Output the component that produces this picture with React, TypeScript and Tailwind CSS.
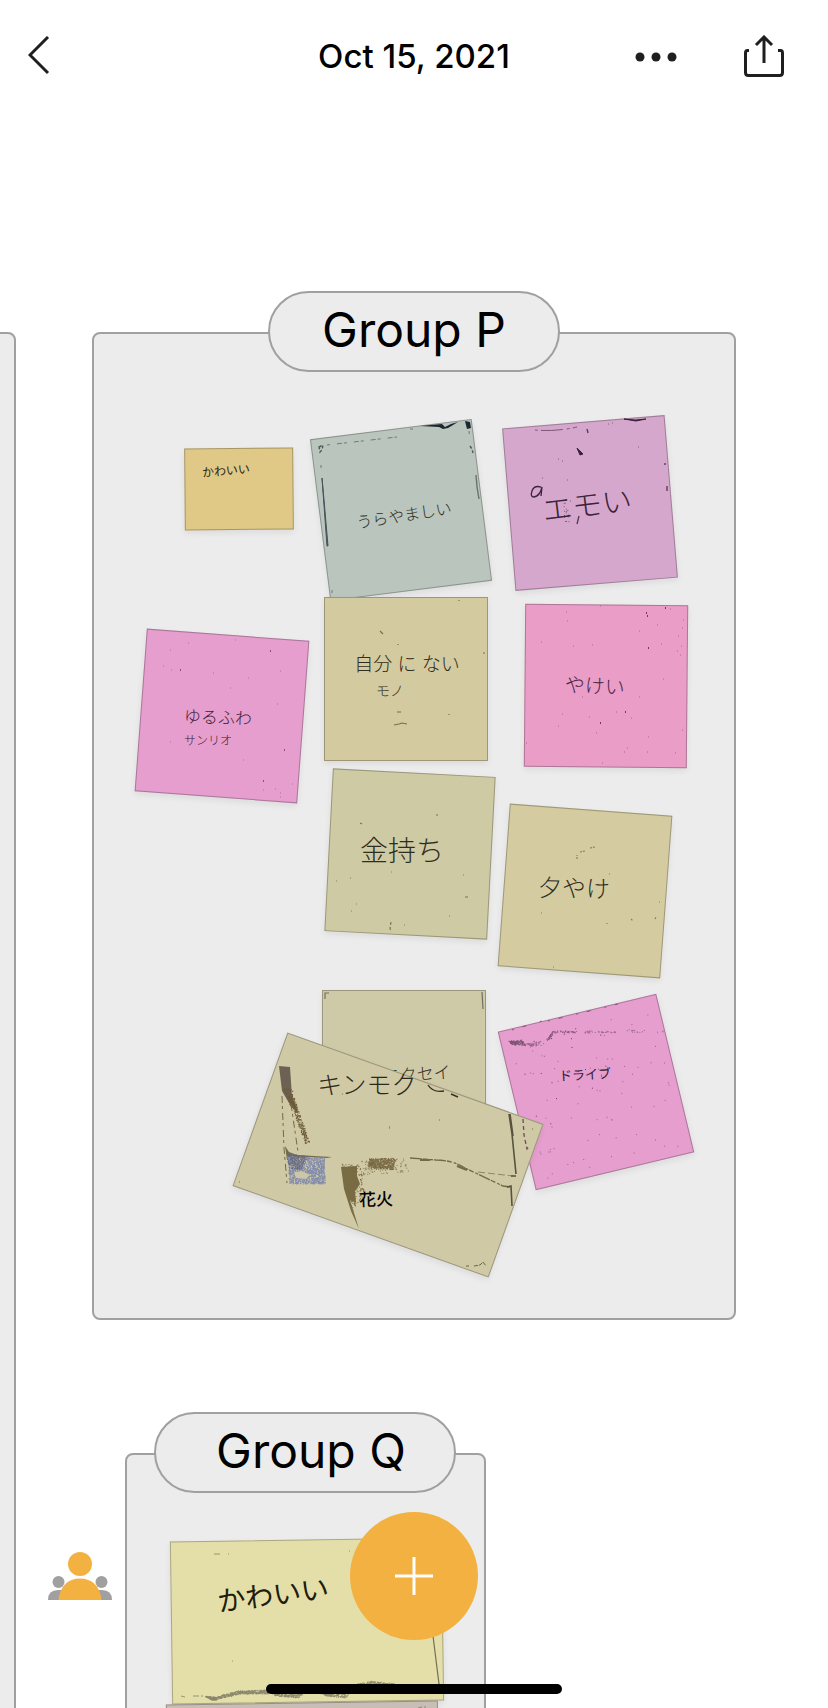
import type { ReactNode } from "react";

type Label = { text: string; x: number; y: number; size: string; turn: number; tone?: string };
type NoteData = {
  id: string;
  cx: number;
  cy: number;
  w: number;
  h: number;
  turn: number;
  paper: string;
  labels?: Label[];
  marks?: ReactNode;
};

/* Reach of a note's ink layer around the note's centre. */
const REACH = 160;

type Point = [number, number];

/* Fine grains spread over the quadrilateral a-b-c-d, as one path of tiny dashes. */
function grains(seed: number, count: number, [a, b, c, d]: [Point, Point, Point, Point]) {
  let s = seed;
  const next = () => {
    s = (s * 1664525 + 1013904223) % 4294967296;
    return s / 4294967296;
  };
  let path = "";
  for (let i = 0; i < count; i++) {
    const u = next();
    const v = next();
    const x = (a[0] * (1 - u) + b[0] * u) * (1 - v) + (d[0] * (1 - u) + c[0] * u) * v;
    const y = (a[1] * (1 - u) + b[1] * u) * (1 - v) + (d[1] * (1 - u) + c[1] * u) * v;
    path += `M${x.toFixed(1)} ${y.toFixed(1)}h1`;
  }
  return path;
}

function dots(points: Point[]) {
  return points.map(([x, y]) => `M${x} ${y}h1`).join("");
}

const groupP: NoteData[] = [
  {
    id: "p1", cx: 239, cy: 489, w: 109, h: 82, turn: -0.5, paper: "bg-[#e0c987]",
    labels: [{ text: "かわいい", x: 226, y: 471, size: "text-[12px]", turn: -5, tone: "text-[#2a2410]" }],
  },
  {
    id: "p2", cx: 401, cy: 510, w: 163, h: 163, turn: -7.2, paper: "bg-[#b9c5bd]",
    labels: [{ text: "うらやましい", x: 404, y: 515, size: "text-[16px]", turn: -9 }],
    marks: (
      <>
        <path d="M420 426l22-2 3 3 6-3 7-2-10 6-5 1-4-2z M465 421l5 1 1 6-4 1z" fill="#1b2630" />
        <path d="M322 478l2 22 4 46h-1z" stroke="#46545a" strokeWidth="1" fill="#46545a" />
        <path d="M476 475l1 12 2 12" stroke="#66736f" strokeWidth="1.4" />
        <path d="M319 447l4-2-1 5-2 2z M470 446l2 3 1 4" stroke="#4d5a5c" strokeWidth="1.4" strokeDasharray="3 2" />
        <path d="M327 445l70-8M410 429h6M469 431l1 10M332 593v-3M321 465v3" stroke="#6d7b7a" strokeWidth="1" strokeDasharray="3 7 5 2" />
      </>
    ),
  },
  {
    id: "p3", cx: 590, cy: 503, w: 163, h: 163, turn: -4.7, paper: "bg-[#d6a7cd]",
    labels: [{ text: "エモい", x: 587, y: 504, size: "text-[30px]", turn: -7, tone: "text-[#3b2438] font-light" }],
    marks: (
      <>
        <path d="M541 487q-7-2-9 4t2 6q6-1 8-10l-1 9" stroke="#3b2438" strokeWidth="1.3" />
        <path d="M577 448l6 6-3 1z M624 419q12 2 22 0l-10 2z" fill="#38243a" stroke="#38243a" strokeWidth="1" />
        <path d="M535 430q20 2 42-3" stroke="#7e577a" strokeWidth="1" strokeDasharray="3 3 22 4" />
        <path d="M587 429l1 4M667 486v5M665 463v2M579 516l-2 8" stroke="#5d3c59" strokeWidth="1.4" />
        <path d={grains(9, 16, [[563, 501], [570, 501], [569, 524], [564, 524]])} stroke="#7c5676" />
        <path d={dots([[558, 459], [562, 461], [542, 478], [567, 480], [608, 424], [612, 423], [638, 447]])} stroke="#85607f" />
      </>
    ),
  },
  {
    id: "p4", cx: 222, cy: 716, w: 163, h: 163, turn: 4.3, paper: "bg-[#e59ecd]",
    labels: [
      { text: "ゆるふわ", x: 218, y: 717, size: "text-[17px]", turn: 2, tone: "text-[#3d2038] font-light" },
      { text: "サンリオ", x: 208, y: 741, size: "text-[12px]", turn: 0, tone: "text-[#3d2038] font-light" },
    ],
    marks: (
      <>
        <path d={dots([[270, 651], [180, 670], [263, 781], [284, 750]])} stroke="#6b3a60" strokeWidth="1.4" />
        <path d={dots([[170, 650], [188, 643], [163, 666], [171, 670], [213, 673], [248, 678], [235, 640], [280, 671], [230, 688], [277, 704], [170, 742], [243, 760], [263, 790], [275, 789], [280, 797], [280, 793], [292, 784]])} stroke="#b26f9f" />
      </>
    ),
  },
  {
    id: "p11", cx: 596, cy: 1092, w: 163, h: 163, turn: -13.5, paper: "bg-[#e59ece]",
    labels: [{ text: "ドライブ", x: 585, y: 1075, size: "text-[13px]", turn: -3, tone: "text-[#321a2f]" }],
    marks: (
      <>
        <path d={grains(5, 120, [[508, 1041], [521, 1040], [526, 1046], [512, 1045]])} stroke="#7d5473" />
        <path d={grains(8, 45, [[526, 1044], [541, 1041], [537, 1046], [530, 1046]])} stroke="#96618a" />
        <path d={grains(14, 30, [[545, 1041], [552, 1032], [553, 1034], [548, 1042]])} stroke="#8d5a82" />
        <path d={grains(19, 45, [[551, 1031], [577, 1031], [577, 1033], [551, 1033]])} stroke="#8d5a82" />
        <path d={grains(25, 40, [[584, 1031], [616, 1031], [616, 1033], [584, 1033]])} stroke="#9c688f" />
        <path d={grains(27, 16, [[625, 1030], [663, 1030], [663, 1033], [625, 1033]])} stroke="#9c688f" />
        <path d="M512 1030l30-9M548 1021l70-17" stroke="#83517a" strokeDasharray="2 9 4 14" />
        <path d={grains(31, 70, [[502, 1040], [654, 1003], [685, 1146], [541, 1182]])} stroke="#a2628f" />
        <path d={grains(72, 22, [[505, 1040], [600, 1019], [625, 1130], [530, 1150]])} stroke="#6d3c64" />
      </>
    ),
  },
  {
    id: "p6", cx: 606, cy: 686, w: 163, h: 163, turn: 0.5, paper: "bg-[#e99dc7]",
    labels: [{ text: "やけい", x: 595, y: 685, size: "text-[20px]", turn: 3, tone: "text-[#4a2440] font-light" }],
    marks: (
      <>
        <path d={dots([[646, 613], [647, 616], [665, 608], [648, 648], [625, 712], [600, 723]])} stroke="#72375f" strokeWidth="1.8" />
        <path d={dots([[558, 726], [682, 628], [682, 730], [567, 621], [657, 625], [566, 612], [600, 606], [639, 631], [573, 646], [592, 645], [541, 642], [661, 644], [678, 636], [681, 646], [677, 651], [680, 655], [616, 712], [631, 718], [582, 697], [562, 714], [589, 717], [596, 733], [627, 748], [624, 752], [647, 752], [675, 753], [648, 737], [526, 743], [683, 620], [602, 763], [670, 609], [663, 679], [639, 697]])} stroke="#b0648f" />
      </>
    ),
  },
  {
    id: "p5", cx: 406, cy: 679, w: 164, h: 164, turn: 0, paper: "bg-[#d3ca9f]",
    labels: [
      { text: "自分 に ない", x: 407, y: 663, size: "text-[19px]", turn: 0 },
      { text: "モノ", x: 390, y: 691, size: "text-[14px]", turn: -1 },
    ],
    marks: (
      <path d="M380 631l3 3M398 644v1M394 725l5-1 3-1 5 1M397 712h4M449 714v1M459 601v-1M483 653h2" stroke="#77704f" strokeWidth="1.2" />
    ),
  },
  {
    id: "p7", cx: 410, cy: 854, w: 163, h: 163, turn: 3, paper: "bg-[#cecba4]",
    labels: [{ text: "金持ち", x: 402, y: 850, size: "text-[28px]", turn: 0 }],
    marks: (
      <>
        <path d="M391 922l-1 6 1 4M436 815h2M465 897h4M360 823l2 1" stroke="#787554" strokeWidth="1.2" strokeDasharray="3 2" />
        <path d={dots([[350, 878], [356, 904], [351, 911], [391, 872], [463, 875], [449, 916], [404, 925], [336, 881]])} stroke="#858161" />
      </>
    ),
  },
  {
    id: "p8", cx: 585, cy: 891, w: 163, h: 163, turn: 4.3, paper: "bg-[#d4cba1]",
    labels: [{ text: "夕やけ", x: 574, y: 888, size: "text-[24px]", turn: 1 }],
    marks: (
      <>
        <path d="M580 852l5-1M590 848l5-1M577 859v-4M655 919l1-2M607 923v1M631 919l2 2" stroke="#8a815c" strokeWidth="1.2" strokeDasharray="2 1" />
        <path d={dots([[541, 913], [553, 967], [609, 874], [659, 902]])} stroke="#8a815c" />
      </>
    ),
  },
  {
    id: "p9", cx: 404, cy: 1072, w: 164, h: 164, turn: 0, paper: "bg-[#cecaa7]",
    labels: [{ text: "キンモクセイ", x: 400, y: 1075, size: "text-[17px]", turn: -4 }],
    marks: <path d="M482 992l1 17M325 999v-6h4" stroke="#70705e" strokeWidth="1.2" />,
  },
  {
    id: "p10", cx: 388, cy: 1155, w: 272, h: 163, turn: 19.7, paper: "bg-[#cfc9a6]",
    labels: [
      { text: "キンモク", x: 367, y: 1084, size: "text-[25px]", turn: 0, tone: "text-[#2a2818] font-light" },
      { text: "花火", x: 376, y: 1199, size: "text-[17px]", turn: -2, tone: "text-black font-medium" },
    ],
    marks: (
      <>
        <path d="M428 1085q5 8 16 6M451 1094l7 3" stroke="#34321f" strokeWidth="1.4" />
        <path d="M279 1066l11 1 2 30 6 14-9-8-7-12z" fill="#6d6154" />
        <path d={grains(2, 150, [[282, 1086], [292, 1090], [297, 1112], [290, 1106]])} stroke="#6d5d3f" />
        <path d={grains(3, 230, [[288, 1098], [294, 1098], [309, 1142], [305, 1144]])} stroke="#6d5d38" />
        <path d="M282 1096l2 52 3 35M291 1104l7 48" stroke="#75694b" strokeWidth="1" strokeDasharray="7 3 3 4" />
        <path d="M285 1146l4 6 8 3 35 2-5 1-20-1-20 3z" fill="#766b4c" />
        <path d={grains(6, 1100, [[287, 1156], [324, 1158], [325, 1184], [289, 1184]])} stroke="#838cab" strokeWidth="1.2" />
        <path d={grains(11, 200, [[287, 1153], [308, 1156], [300, 1170], [288, 1168]])} stroke="#696b7e" />
        <path d="M294 1172l8-1 8 4-4 4-10-1z" fill="#c9c6a9" />
        <path d="M341 1167l16-1v10l3 8-5 7 1 12-6-3 9 29-8-18-7-22z" fill="#796b43" />
        <path d={grains(22, 170, [[340, 1164], [360, 1165], [364, 1193], [352, 1212]])} stroke="#796b43" />
        <path d={grains(15, 480, [[369, 1159], [395, 1158], [393, 1170], [367, 1168]])} stroke="#786842" />
        <path d={grains(17, 110, [[360, 1161], [403, 1158], [409, 1173], [361, 1175]])} stroke="#8a7c56" />
        <path d="M410 1158l26 2q16 0 29 8l38 18 7 1" stroke="#756a48" strokeWidth="1.3" strokeDasharray="12 1 5 2 3 1" />
        <path d="M420 1160h10M457 1166l10 4" stroke="#756a48" strokeWidth="2" />
        <path d="M478 1172l35 4" stroke="#8f8664" strokeDasharray="7 3" />
        <path d="M509 1114l3 20 4 40M510 1114l3 22M511 1176h5M507 1187l4-1 1 20" stroke="#57533d" strokeWidth="1.6" />
        <path d="M523 1119l1 16 3 14 2-2" stroke="#75465f" strokeWidth="1.3" strokeDasharray="4 3" />
        <path d="M466 1266h3M474 1266l6-1 3-3 3 4" stroke="#696443" strokeDasharray="4 1" />
        <path d={dots([[389, 1128], [389, 1127], [439, 1120], [342, 1094], [532, 1129], [239, 1182]])} stroke="#77704f" />
      </>
    ),
  },
];

const groupQ: NoteData[] = [
  {
    id: "q1", cx: 307, cy: 1621, w: 272, h: 163, turn: -0.8, paper: "bg-[#e4dfa9]",
    labels: [{ text: "かわいい", x: 273, y: 1594, size: "text-[28px]", turn: -7, tone: "text-[#211d0c]" }],
    marks: (
      <>
        <path d="M433 1636l6 48" stroke="#77735a" strokeWidth="1.3" />
        <path d="M214 1554h8M228 1554h1M349 1551h1M232 1661h1M181 1696l4 1M193 1696l10 0" stroke="#98946d" strokeDasharray="6 2" />
        <path d={grains(41, 130, [[204, 1696], [214, 1697], [216, 1700], [211, 1700]])} stroke="#8c886e" />
        <path d={grains(42, 190, [[211, 1698], [238, 1691], [240, 1694], [214, 1700]])} stroke="#8c886e" />
        <path d={grains(43, 260, [[236, 1691], [268, 1690], [268, 1694], [238, 1694]])} stroke="#8c886e" />
        <path d={grains(44, 220, [[268, 1691], [304, 1693], [298, 1698], [274, 1696]])} stroke="#8c886e" />
        <path d={grains(45, 180, [[318, 1693], [352, 1690], [346, 1698], [326, 1696]])} stroke="#8c886e" />
        <path d={grains(46, 160, [[352, 1685], [372, 1681], [396, 1684], [358, 1686]])} stroke="#8c886e" />
      </>
    ),
  },
  {
    id: "q2", cx: 303, cy: 1784, w: 272, h: 163, turn: -0.8, paper: "bg-[#c9beb5]",
    marks: <path d="M418 1708l4-1M424 1707h2" stroke="#8f867d" />,
  },
];

function Note({ note, left, top }: { note: NoteData; left: number; top: number }) {
  const originX = note.cx - REACH;
  const originY = note.cy - REACH;
  return (
    <article
      className="absolute"
      style={{ left: note.cx - left, top: note.cy - top }}
    >
      <div
        className={`absolute border border-black/25 shadow-[0_3px_6px_rgba(0,0,0,0.07)] ${note.paper}`}
        style={{
          width: note.w,
          height: note.h,
          transform: `translate(-50%, -50%) rotate(${note.turn}deg)`,
        }}
      />
      {note.marks && (
        <svg
          aria-hidden="true"
          className="absolute -top-40 -left-40 size-80 max-w-none fill-none"
          viewBox={`${originX} ${originY} ${REACH * 2} ${REACH * 2}`}
        >
          {note.marks}
        </svg>
      )}
      {note.labels?.map((label) => (
        <p
          key={label.text}
          className={`absolute leading-none whitespace-nowrap ${label.size} ${label.tone ?? "text-[#2f2d20] font-light"}`}
          style={{
            left: label.x - note.cx,
            top: label.y - note.cy,
            transform: `translate(-50%, -50%) rotate(${label.turn}deg)`,
          }}
        >
          {label.text}
        </p>
      ))}
    </article>
  );
}

function Title({ children, className }: { children: ReactNode; className: string }) {
  return (
    <h2
      className={`absolute -top-[43px] flex h-[81px] items-center justify-center rounded-full border-2 border-[#a0a0a0] bg-[#ececec] pb-1 font-[Inter,sans-serif] text-[48px] leading-none text-black ${className}`}
    >
      {children}
    </h2>
  );
}

export default function App() {
  return (
    <div className="relative flex h-screen flex-col overflow-hidden bg-white font-[Lato,'Noto_Sans_CJK_JP',sans-serif]">
      <header className="grid h-28 shrink-0 grid-cols-[1fr_auto_1fr] items-center px-7 text-[#1f1f1f]">
        <button type="button" aria-label="Back" className="justify-self-start">
          <svg className="h-10 w-6 fill-none stroke-current" viewBox="0 0 24 40" strokeWidth="3">
            <path d="M20 1L2 19l18 18" />
          </svg>
        </button>
        <h1 className="font-[Inter,sans-serif] text-[33px] font-medium leading-none text-black">
          Oct 15, 2021
        </h1>
        <div className="mr-4 flex items-center gap-[67px] justify-self-end">
          <button type="button" aria-label="More">
            <svg className="h-10 w-[42px] fill-current" viewBox="0 0 42 40">
              <circle cx="5" cy="21" r="4.5" />
              <circle cx="21" cy="21" r="4.5" />
              <circle cx="37" cy="21" r="4.5" />
            </svg>
          </button>
          <button type="button" aria-label="Share">
            <svg className="h-[42px] w-10 fill-none stroke-current" viewBox="0 0 40 42" strokeWidth="3">
              <path d="M20 28V2M12 10l8-8 8 8M5 15.500H3.500Q1.500 15.500 1.500 18v19.500q0 3 3 3h31q3 0 3-3V18q0-2.500-2-2.500H34" />
            </svg>
          </button>
        </div>
      </header>

      <main className="relative min-h-0 flex-1 overflow-hidden">
        <section
          aria-label="Previous group"
          className="absolute top-[220px] -bottom-4 -left-4 w-8 rounded-lg border-2 border-[#a0a0a0] bg-[#ececec]"
        />

        <section className="absolute top-[220px] left-[92px] h-[988px] w-[644px] rounded-lg border-2 border-[#a0a0a0] bg-[#ececec]">
          <Title className="left-[174px] w-[292px]">Group P</Title>
          {groupP.map((note) => (
            <Note key={note.id} note={note} left={94} top={334} />
          ))}
        </section>

        <section className="absolute top-[1341px] left-[125px] h-[600px] w-[361px] rounded-lg border-2 border-[#a0a0a0] bg-[#ececec]">
          <Title className="left-[27px] w-[302px] pl-3">Group Q</Title>
          {groupQ.map((note) => (
            <Note key={note.id} note={note} left={127} top={1455} />
          ))}
        </section>
      </main>

      <button type="button" aria-label="Members" className="absolute bottom-[108px] left-12">
        <svg className="h-12 w-16" viewBox="0 0 64 48">
          <g fill="#a0a0a0">
            <circle cx="10.500" cy="30" r="6" />
            <circle cx="53.500" cy="30" r="6" />
            <path d="M0 48q0-10 10-10h5v10zM64 48q0-10-10-10h-5v10z" />
          </g>
          <circle cx="32" cy="12" r="12" fill="#f2b140" />
          <path d="M10.500 48C12 34 20 26.500 32 26.500s20 7.500 21.500 21.500z" fill="#f2b140" />
        </svg>
      </button>

      <button
        type="button"
        aria-label="Add"
        className="absolute bottom-[68px] left-1/2 flex size-32 -translate-x-1/2 items-center justify-center rounded-full bg-[#f2b140]"
      >
        <svg className="size-10 stroke-white" viewBox="0 0 40 40" strokeWidth="3">
          <path d="M20 1v38M1 20h38" />
        </svg>
      </button>

      <div className="absolute bottom-[14px] left-1/2 h-[10px] w-[296px] -translate-x-1/2 rounded-full bg-black" />
    </div>
  );
}
